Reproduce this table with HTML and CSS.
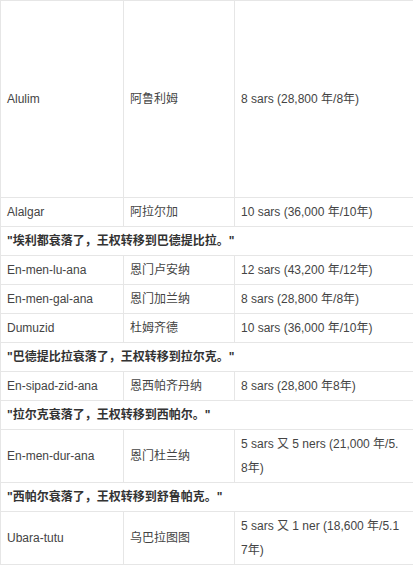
FILE: index.html
```html
<!DOCTYPE html>
<html lang="zh">
<head>
<meta charset="utf-8">
<link rel="stylesheet" href="styles.css">
</head>
<body>
<table class="kings">
  <colgroup>
    <col class="c1">
    <col class="c2">
    <col class="c3">
  </colgroup>
  <tbody>
    <tr class="tall"><td>Alulim</td><td>阿鲁利姆</td><td>8 sars (28,800 年/8年)</td></tr>
    <tr><td>Alalgar</td><td>阿拉尔加</td><td>10 sars (36,000 年/10年)</td></tr>
    <tr class="note"><td colspan="3">"埃利都衰落了，王权转移到巴德提比拉。"</td></tr>
    <tr><td>En-men-lu-ana</td><td>恩门卢安纳</td><td>12 sars (43,200 年/12年)</td></tr>
    <tr><td>En-men-gal-ana</td><td>恩门加兰纳</td><td>8 sars (28,800 年/8年)</td></tr>
    <tr><td>Dumuzid</td><td>杜姆齐德</td><td>10 sars (36,000 年/10年)</td></tr>
    <tr class="note"><td colspan="3">"巴德提比拉衰落了，王权转移到拉尔克。"</td></tr>
    <tr><td>En-sipad-zid-ana</td><td>恩西帕齐丹纳</td><td>8 sars (28,800 年8年)</td></tr>
    <tr class="note"><td colspan="3">"拉尔克衰落了，王权转移到西帕尔。"</td></tr>
    <tr><td>En-men-dur-ana</td><td>恩门杜兰纳</td><td>5 sars 又 5 ners (21,000 年/5.8年)</td></tr>
    <tr class="note"><td colspan="3">"西帕尔衰落了，王权转移到舒鲁帕克。"</td></tr>
    <tr><td>Ubara-tutu</td><td>乌巴拉图图</td><td>5 sars 又 1 ner (18,600 年/5.17年)</td></tr>
  </tbody>
</table>
</body>
</html>
```

FILE: styles.css
```css
html, body {
  margin: 0;
  padding: 0;
  background: #fff;
}
body {
  font-family: "Liberation Sans", Arial, "Noto Sans CJK SC", sans-serif;
  font-size: 12px;
  color: #444;
}
.kings {
  border-collapse: collapse;
  table-layout: fixed;
  width: 413px;
}
.c1 { width: 123px; }
.c2 { width: 111px; }
.c3 { width: 179px; }
.kings td {
  border: 1px solid #e6e6e6;
  padding: 2px 12px 2px 6px;
  line-height: 24px;
  vertical-align: middle;
  word-break: break-all;
}
.kings .tall td {
  height: 192px;
}
.kings .note td {
  font-weight: bold;
  color: #333;
}
```
